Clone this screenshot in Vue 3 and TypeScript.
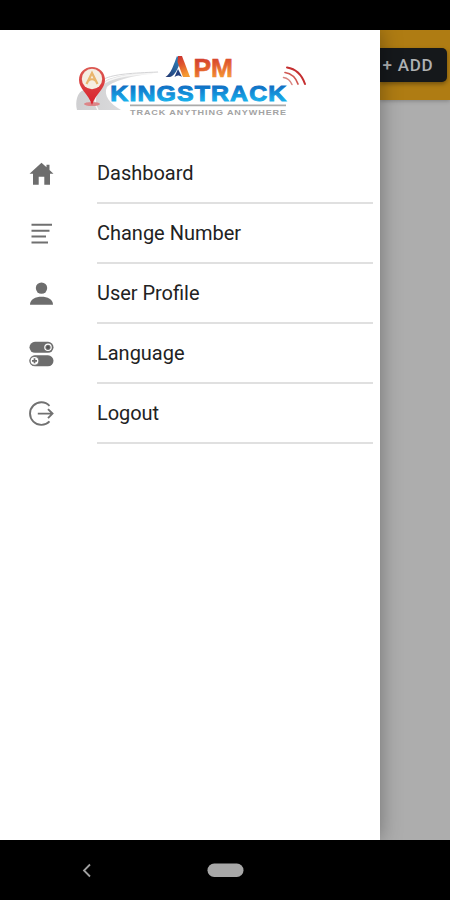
<script setup lang="ts">
type IconName = 'home' | 'list' | 'person' | 'toggles' | 'logout'
interface MenuItem {
  label: string
  icon: IconName
  width: number
}
const items: MenuItem[] = [
  { label: 'Dashboard', icon: 'home', width: 96.5 },
  { label: 'Change Number', icon: 'list', width: 144 },
  { label: 'User Profile', icon: 'person', width: 102.5 },
  { label: 'Language', icon: 'toggles', width: 87.5 },
  { label: 'Logout', icon: 'logout', width: 62 },
]
</script>

<template>
  <div class="screen">
    <div class="status"></div>
    <div class="body">
      <aside class="drawer">
        <header class="brand">
          <svg class="logo" width="240" height="76" viewBox="70 45 240 76">
            <defs>
              <linearGradient id="orange" x1="0" y1="0" x2="0.3" y2="1">
                <stop offset="0" stop-color="#c9302f" />
                <stop offset="0.5" stop-color="#e0592d" />
                <stop offset="1" stop-color="#f59a33" />
              </linearGradient>
              <linearGradient id="blue" x1="0" y1="0" x2="0" y2="1">
                <stop offset="0.2" stop-color="#0f6fc4" />
                <stop offset="0.85" stop-color="#18b4ee" />
              </linearGradient>
              <linearGradient id="navy" x1="0" y1="1" x2="1" y2="0">
                <stop offset="0" stop-color="#22356f" />
                <stop offset="1" stop-color="#2f8fc8" />
              </linearGradient>
              <linearGradient id="road" x1="0" y1="0" x2="1" y2="0">
                <stop offset="0" stop-color="#cfcfd1" />
                <stop offset="0.5" stop-color="#dadadb" />
                <stop offset="1" stop-color="#f0f0f0" />
              </linearGradient>
              <linearGradient id="pin" x1="0" y1="0" x2="0" y2="1">
                <stop offset="0" stop-color="#dc5a53" />
                <stop offset="1" stop-color="#d9202c" />
              </linearGradient>
            </defs>
            <path d="M104 82C112 75 138 73 162 72C136 75 114 80 107 87C103 95 110 104 121 110H77C75 102 77 92 84 90C93 89 99 87 104 82Z" fill="url(#road)" />
            <path d="M98 110C91 99 98 88 106 82C114 77 135 74 152 73.500" fill="none" stroke="#f6f6f6" stroke-width="1.500" />
            <path d="M104 79C114 74 133 73 158 72" fill="none" stroke="#cfcfd1" stroke-width="0.900" />
            <ellipse cx="92" cy="104" rx="8" ry="2" fill="#dc8588" />
            <path d="M92 67C84.500 67 79 72.500 79 80C79 89 88 93 92 105C96 93 105 89 105 80C105 72.500 99.500 67 92 67Z" fill="url(#pin)" />
            <circle cx="92" cy="79" r="10.200" fill="#f5eee2" />
            <path d="M86.500 84L92 73L97.500 84M88.500 80.500Q92 78 95.500 80.500" fill="none" stroke="#e9b56b" stroke-width="2.200" />
            <path d="M165.500 77C171 74 174 64 177 56L181 60C178 68 175 76 170 77Z" fill="url(#navy)" />
            <path d="M178 56H182L190 77H183L177.500 62Z" fill="url(#orange)" />
            <path d="M174.500 77L178 69L182 77C179 75 177 75 174.500 77Z" fill="#23407f" />
            <text class="arial warm" x="193.500" y="77" font-size="25" textLength="39.500" lengthAdjust="spacingAndGlyphs" fill="url(#orange)">PM</text>
            <text class="arial heavy" x="110.300" y="100.900" font-size="22" textLength="177" lengthAdjust="spacingAndGlyphs" fill="url(#blue)">KINGSTRACK</text>
            <path d="M130 105.300H286" stroke="#aaa" stroke-width="1.800" />
            <text class="tag" x="130" y="114.700" font-size="8" textLength="157" lengthAdjust="spacingAndGlyphs">TRACK ANYTHING ANYWHERE</text>
            <g fill="none" stroke-linecap="round">
              <path d="M283.500 77.500Q289.500 78.500 292 84.500" stroke="#d88580" stroke-width="1.500" />
              <path d="M285 72.500Q294.500 74 298 84" stroke="#d05852" stroke-width="1.700" />
              <path d="M287 67.500Q300 69.500 305 84" stroke="#c52f30" stroke-width="2" />
            </g>
          </svg>
        </header>
        <nav class="menu">
          <a v-for="item in items" :key="item.label" class="row">
            <svg class="icon" width="26" height="26" viewBox="0 0.7 26 26">
              <path v-if="item.icon === 'home'" fill="#6d6d6d" d="M13.500 2.500L1.500 13.500H5V24.500H10.700V16.500H16.300V24.500H22V13.500H25.500L21.500 9.800V4.500H18.500V7Z" />
              <path v-else-if="item.icon === 'list'" fill="none" stroke="#707070" stroke-width="2" d="M3.500 4.500H24M3.500 10.500H21.500M3.500 16.200H18M3.500 22.300H20" />
              <g v-else-if="item.icon === 'person'" fill="#6d6d6d">
                <circle cx="13.500" cy="7.800" r="5.700" />
                <path d="M2 24.500C2 19 7.500 16.500 13.500 16.500S25 19 25 24.500Z" />
              </g>
              <g v-else-if="item.icon === 'toggles'">
                <rect x="1.500" y="1.500" width="24" height="11" rx="5.500" fill="#6d6d6d" />
                <rect x="1.500" y="15" width="24" height="11" rx="5.500" fill="#6d6d6d" />
                <circle cx="20" cy="7" r="3.200" fill="#6d6d6d" stroke="#fff" stroke-width="1.200" />
                <circle cx="6.500" cy="20.500" r="4.500" fill="#fff" stroke="#777" stroke-width="1.200" />
                <circle cx="20" cy="7" r="1.400" fill="#505050" />
                <path d="M4 20.500H9M6.500 18V23" stroke="#6d6d6d" stroke-width="1.700" />
              </g>
              <g v-else fill="none" stroke="#717171" stroke-width="1.900">
                <path d="M21.500 5.500A11.300 11.300 0 1 0 21.500 21.100" />
                <path d="M9.800 13.300H24.500M20 8.800L24.500 13.300L20 17.800" />
              </g>
            </svg>
            <span class="cell">
              <svg class="label" :width="item.width + 4" height="30">
                <text x="0" y="21" :textLength="item.width" lengthAdjust="spacing">{{ item.label }}</text>
              </svg>
            </span>
          </a>
        </nav>
      </aside>
      <main class="page">
        <div class="toolbar"><button class="add">+ ADD</button></div>
      </main>
    </div>
    <footer class="system">
      <svg class="keys" width="450" height="60">
        <path d="M90 24.500L84 30.500L90 36.500" fill="none" stroke="#a0a0a0" stroke-width="1.800" />
        <rect x="207.500" y="23.500" width="36" height="13.500" rx="6.700" fill="#a7a7a7" />
      </svg>
    </footer>
  </div>
</template>

<style>
body {
  margin: 0;
  background: #000;
}
</style>

<style scoped>
.screen {
  display: flex;
  flex-direction: column;
  width: 450px;
  height: 900px;
  overflow: hidden;
  background: #000;
  font-family: Roboto, sans-serif;
}
.status {
  flex: 0 0 30px;
}
.body {
  display: flex;
  flex: 1;
  min-height: 0;
  overflow: hidden;
}
.drawer {
  position: relative;
  z-index: 1;
  flex: 0 0 380.400px;
  background: #fff;
  box-shadow: 0 0 20px rgba(0, 0, 0, 0.35);
}
.brand {
  box-sizing: border-box;
  height: 114px;
  padding: 15px 0 0 70px;
}
.logo,
.keys,
.label {
  display: block;
}
.arial {
  font-family: "Liberation Sans", sans-serif;
  font-weight: 700;
}
.warm {
  stroke: url(#orange);
  stroke-width: 0.6px;
}
.heavy {
  letter-spacing: 1px;
  stroke: url(#blue);
  stroke-width: 1px;
}
.tag {
  font-family: "Liberation Sans", sans-serif;
  font-weight: 700;
  letter-spacing: 0.8px;
  fill: #a3a3a3;
}
.row {
  display: flex;
  align-items: center;
  height: 60px;
  padding: 0 7.400px 0 28px;
}
.icon {
  flex: none;
  margin-right: 42.500px;
}
.cell {
  display: flex;
  flex: 1;
  align-items: center;
  box-sizing: border-box;
  height: 60px;
  padding-top: 1px;
  border-bottom: 2px solid #e0e0e0;
}
.label {
  overflow: visible;
  font-size: 20px;
  fill: #222;
}
.page {
  flex: 1;
  overflow: hidden;
  background: #adadad;
}
.toolbar {
  display: flex;
  align-items: center;
  height: 70px;
  background: #af7c13;
  box-shadow: 0 1px 4px rgba(0, 0, 0, 0.25);
}
.add {
  flex: none;
  width: 67px;
  height: 34px;
  padding: 0 0 0 2px;
  border: 0;
  border-radius: 0 5px 5px 0;
  background: #15181b;
  box-shadow: 0 2px 4px rgba(0, 0, 0, 0.35);
  color: #aeb0b2;
  font: 500 17px Roboto, sans-serif;
  letter-spacing: 0.8px;
  text-align: left;
  white-space: nowrap;
}
.system {
  flex: 0 0 60px;
}
</style>
